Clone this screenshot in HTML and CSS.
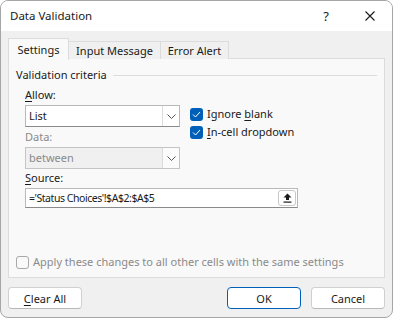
FILE: index.html
```html
<!DOCTYPE html>
<html lang="en">
<head>
    <meta charset="UTF-8">
    <title>Data Validation</title>
    <link rel="stylesheet" href="styles.css">
</head>
<body>
    <div class="dialog">
        <div class="titlebar">
            <span class="title">Data Validation</span>
            <span class="help">?</span>
            <svg class="close" width="10" height="10" viewBox="0 0 10 10">
                <path d="M0.5 0.5 L9.5 9.5 M9.5 0.5 L0.5 9.5" stroke="#1a1a1a" stroke-width="1.1" fill="none"/>
            </svg>
        </div>

        <div class="content">
            <div class="tabs">
                <div class="tab tab-active">Settings</div>
                <div class="tab">Input Message</div>
                <div class="tab">Error Alert</div>
            </div>

            <div class="panel">
                <div class="legend">
                    <span>Validation criteria</span>
                    <span class="legend-line"></span>
                </div>

                <div class="criteria">
                    <div class="fields">
                        <div class="field-label"><u>A</u>llow:</div>
                        <div class="select">
                            <span class="select-value">List</span>
                            <span class="select-btn">
                                <svg width="9" height="5" viewBox="0 0 9 5"><path d="M0.5 0.5 L4.5 4.5 L8.5 0.5" stroke="#555" fill="none"/></svg>
                            </span>
                        </div>
                        <div class="field-label field-label-disabled">Data:</div>
                        <div class="select select-disabled">
                            <span class="select-value">between</span>
                            <span class="select-btn">
                                <svg width="9" height="5" viewBox="0 0 9 5"><path d="M0.5 0.5 L4.5 4.5 L8.5 0.5" stroke="#555" fill="none"/></svg>
                            </span>
                        </div>
                    </div>

                    <div class="options">
                        <label class="check-row">
                            <span class="check check-on">
                                <svg width="9" height="7" viewBox="0 0 9 7"><path d="M1 3.5 L3.5 6 L8 1" stroke="#fff" stroke-width="1" fill="none"/></svg>
                            </span>
                            <span>Ignore <u>b</u>lank</span>
                        </label>
                        <label class="check-row">
                            <span class="check check-on">
                                <svg width="9" height="7" viewBox="0 0 9 7"><path d="M1 3.5 L3.5 6 L8 1" stroke="#fff" stroke-width="1" fill="none"/></svg>
                            </span>
                            <span><u>I</u>n-cell dropdown</span>
                        </label>
                    </div>
                </div>

                <div class="source">
                    <div class="field-label"><u>S</u>ource:</div>
                    <div class="source-input">
                        <span class="source-value">='Status Choices'!$A$2:$A$5</span>
                        <span class="ref-btn">
                            <svg width="9" height="10" viewBox="0 0 9 10"><path d="M4.5 0.5 L8.5 4.5 L6 4.5 L6 7 L3 7 L3 4.5 L0.5 4.5 Z" fill="#1a1a1a"/><rect x="0.5" y="8.5" width="8" height="1.2" fill="#1a1a1a"/></svg>
                        </span>
                    </div>
                </div>

                <label class="check-row apply-row">
                    <span class="check check-off"></span>
                    <span>Apply these changes to all other cells with the same settings</span>
                </label>
            </div>

            <div class="buttons">
                <button class="btn"><u>C</u>lear All</button>
                <span class="spacer"></span>
                <button class="btn btn-default">OK</button>
                <button class="btn">Cancel</button>
            </div>
        </div>
    </div>
</body>
</html>
```

FILE: styles.css
```css
* {
    margin: 0;
    padding: 0;
    box-sizing: border-box;
}

body {
    font-family: "Noto Sans", "Open Sans", sans-serif;
    font-size: 11px;
    line-height: 16px;
    color: #1a1a1a;
    background: #ffffff;
    width: 394px;
    height: 319px;
    overflow: hidden;
}

u {
    text-decoration: underline;
    text-underline-offset: 2px;
}

.dialog {
    width: 393px;
    height: 318px;
    border: 1px solid #a6a6a6;
    border-radius: 8px;
    overflow: hidden;
    display: flex;
    flex-direction: column;
    background: #f0f0f0;
}

.titlebar {
    height: 30px;
    background: #ffffff;
    display: flex;
    align-items: center;
    padding-left: 9px;
    flex-shrink: 0;
    font-size: 11.5px;
}

.title {
    flex: 1;
    padding-bottom: 1px;
}

.help {
    font-size: 13px;
    margin-right: 36px;
    padding-bottom: 1px;
}

.close {
    margin-right: 17px;
}

.content {
    flex: 1;
    padding: 7px 7px 0 7px;
    display: flex;
    flex-direction: column;
}

/* tabs */
.tabs {
    display: flex;
    align-items: flex-end;
    height: 20px;
    position: relative;
    z-index: 1;
}

.tab {
    height: 18px;
    border: 1px solid #dcdcdc;
    border-bottom: none;
    border-left: none;
    background: #f0f0f0;
    text-align: center;
    white-space: nowrap;
    line-height: 17px;
    margin-bottom: -1px;
}

.tab:nth-child(2) {
    width: 92px;
}

.tab:nth-child(3) {
    width: 68px;
}

.tab-active {
    width: 61px;
    height: 22px;
    border-left: 1px solid #dcdcdc;
    background: #f9f9f9;
    padding-top: 2px;
    margin-bottom: -2px;
}

.panel {
    height: 220px;
    background: #f9f9f9;
    border: 1px solid #dcdcdc;
    padding: 8px 7px 0 7px;
    display: flex;
    flex-direction: column;
}

.legend {
    display: flex;
    align-items: center;
    height: 16px;
}

.legend-line {
    flex: 1;
    height: 1px;
    background: #dcdcdc;
    margin-left: 6px;
}

.criteria {
    display: flex;
    padding-left: 9px;
    margin-top: 4px;
}

.fields {
    width: 155px;
}

.field-label {
    height: 16px;
}

.field-label-disabled {
    color: #8a8a8a;
    margin-top: 2px;
}

.select {
    height: 22px;
    margin-top: 2px;
    border: 1px solid #b8b8b8;
    border-bottom-color: #8a8a8a;
    background: #ffffff;
    display: flex;
    align-items: stretch;
}

.select-value {
    flex: 1;
    padding-left: 3px;
    line-height: 19px;
}

.select-btn {
    width: 17px;
    border-left: 1px solid #dcdcdc;
    display: flex;
    align-items: center;
    justify-content: center;
    background: #ffffff;
}

.select-disabled {
    background: #f0f0f0;
    border-color: #c4c4c4;
    color: #8a8a8a;
}

.select-disabled .select-btn {
    background: #fbfbfb;
}

.options {
    margin-left: 10px;
    padding-top: 19px;
    display: flex;
    flex-direction: column;
    gap: 2px;
}

.check-row {
    display: flex;
    align-items: center;
    gap: 4px;
    height: 16px;
}

.check {
    width: 13px;
    height: 13px;
    border-radius: 3px;
    display: flex;
    align-items: center;
    justify-content: center;
    flex-shrink: 0;
}

.check-on {
    background: #005fb8;
}

.check-off {
    border: 1px solid #a8a8a8;
    background: #f9f9f9;
}

.source {
    padding-left: 9px;
    margin-top: 1px;
}

.source-input {
    width: 273px;
    height: 20px;
    margin-top: 2px;
    border: 1px solid #b8b8b8;
    border-bottom-color: #8a8a8a;
    background: #ffffff;
    display: flex;
    align-items: center;
    padding: 0 1px 0 3px;
}

.source-value {
    flex: 1;
    font-size: 10.5px;
    letter-spacing: -0.45px;
}

.ref-btn {
    width: 18px;
    height: 16px;
    border: 1px solid #c8c8c8;
    border-radius: 3px;
    display: flex;
    align-items: center;
    justify-content: center;
    background: #ffffff;
}

.apply-row {
    margin-top: 46px;
    color: #8a8a8a;
}

.buttons {
    display: flex;
    margin-top: 9px;
    gap: 10px;
}

.spacer {
    flex: 1;
}

.btn {
    width: 74px;
    height: 22px;
    font-family: inherit;
    font-size: 11px;
    color: #1a1a1a;
    background: #ffffff;
    border: 1px solid #d0d0d0;
    border-bottom-color: #b8b8b8;
    border-radius: 4px;
}

.btn-default {
    border-color: #005fb8;
}
```
